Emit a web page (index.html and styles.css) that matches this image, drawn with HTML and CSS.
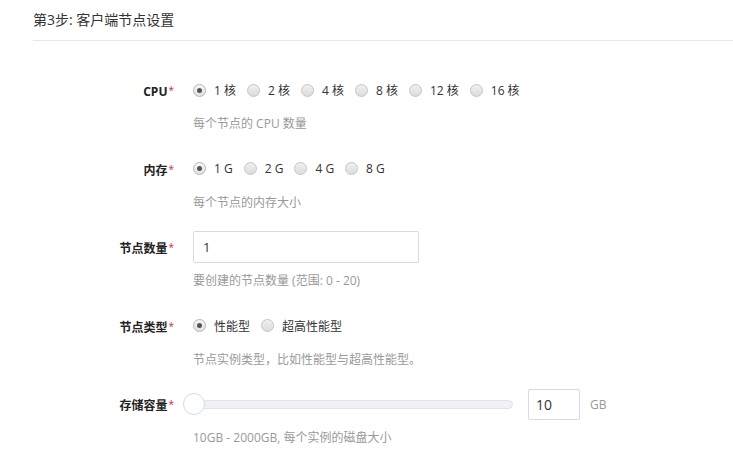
FILE: index.html
```html
<!DOCTYPE html>
<html lang="zh-CN">
<head>
<meta charset="utf-8">
<title>第3步: 客户端节点设置</title>
<link rel="stylesheet" href="styles.css">
</head>
<body>
<div class="page">
  <div class="header">第3步: 客户端节点设置</div>
  <div class="form">
    <div class="field">
      <div class="label">CPU<span class="req">*</span></div>
      <div class="control">
        <label class="radio"><span class="dot checked"></span>1 核</label>
        <label class="radio"><span class="dot"></span>2 核</label>
        <label class="radio"><span class="dot"></span>4 核</label>
        <label class="radio"><span class="dot"></span>8 核</label>
        <label class="radio"><span class="dot"></span>12 核</label>
        <label class="radio"><span class="dot"></span>16 核</label>
      </div>
      <div class="help">每个节点的 CPU 数量</div>
    </div>
    <div class="field">
      <div class="label">内存<span class="req">*</span></div>
      <div class="control">
        <label class="radio"><span class="dot checked"></span>1 G</label>
        <label class="radio"><span class="dot"></span>2 G</label>
        <label class="radio"><span class="dot"></span>4 G</label>
        <label class="radio"><span class="dot"></span>8 G</label>
      </div>
      <div class="help">每个节点的内存大小</div>
    </div>
    <div class="field">
      <div class="label">节点数量<span class="req">*</span></div>
      <div class="control">
        <div class="input wide">1</div>
      </div>
      <div class="help">要创建的节点数量 (范围: 0 - 20)</div>
    </div>
    <div class="field">
      <div class="label">节点类型<span class="req">*</span></div>
      <div class="control">
        <label class="radio"><span class="dot checked"></span>性能型</label>
        <label class="radio"><span class="dot"></span>超高性能型</label>
      </div>
      <div class="help">节点实例类型，比如性能型与超高性能型。</div>
    </div>
    <div class="field">
      <div class="label">存储容量<span class="req">*</span></div>
      <div class="control">
        <div class="slider"><span class="thumb"></span></div>
        <div class="input small">10</div>
        <span class="unit">GB</span>
      </div>
      <div class="help">10GB - 2000GB, 每个实例的磁盘大小</div>
    </div>
  </div>
</div>
</body>
</html>
```

FILE: styles.css
```css
html, body {
  margin: 0;
  padding: 0;
  background: #fff;
}
body {
  font-family: "Open Sans", "Noto Sans CJK SC", sans-serif;
  font-size: 12px;
  color: #333;
}
.page {
  padding: 0 0 0 33px;
}
.header {
  font-size: 14px;
  line-height: 20px;
  padding: 10px 0 10px;
  border-bottom: 1px solid #e5e8ed;
  color: #333;
}
.form {
  padding-top: 33px;
  display: flex;
  flex-direction: column;
  gap: 19.5px;
}
.field {
  display: grid;
  grid-template-columns: 141px 1fr;
  column-gap: 19px;
  row-gap: 9px;
}
.label {
  text-align: right;
  font-weight: bold;
  line-height: 32px;
  height: 32px;
  color: #222;
}
.req {
  color: #d22a3a;
  font-weight: normal;
  font-size: 10px;
  vertical-align: 2px;
  margin-left: 1px;
}
.control {
  display: flex;
  align-items: center;
  height: 32px;
}
.help {
  grid-column: 2;
  line-height: 18px;
  color: #999;
}
.radio {
  display: flex;
  align-items: center;
  margin-right: 11px;
  color: #333;
}
.dot {
  width: 11px;
  height: 11px;
  border-radius: 50%;
  border: 1px solid #c4c4c4;
  background: linear-gradient(#f0f0f0, #dcdcdc);
  margin-right: 8px;
  position: relative;
}
.dot.checked {
  border-color: #b5b5b5;
  background: linear-gradient(#f6f6f6, #e2e2e2);
}
.dot.checked::after {
  content: "";
  position: absolute;
  left: 3px;
  top: 3px;
  width: 5px;
  height: 5px;
  border-radius: 50%;
  background: #555;
}
.input {
  box-sizing: border-box;
  height: 32px;
  border: 1px solid #d5dbe3;
  border-radius: 2px;
  padding: 0 9px;
  line-height: 30px;
  font-size: 13px;
  color: #333;
}
.input.wide {
  width: 226px;
}
.input.small {
  width: 52px;
  height: 31px;
  line-height: 29px;
  padding: 0 7px;
  font-size: 14px;
}
.slider {
  position: relative;
  box-sizing: border-box;
  width: 320px;
  height: 9px;
  border: 1px solid #dfe3ea;
  border-radius: 5px;
  background: #eff1f7;
  margin-right: 15px;
}
.thumb {
  position: absolute;
  left: -11px;
  top: 50%;
  width: 22px;
  height: 22px;
  margin-top: -11px;
  box-sizing: border-box;
  border: 1px solid #cfdde6;
  border-radius: 50%;
  background: #fff;
}
.unit {
  margin-left: 10px;
  color: #999;
}
```
